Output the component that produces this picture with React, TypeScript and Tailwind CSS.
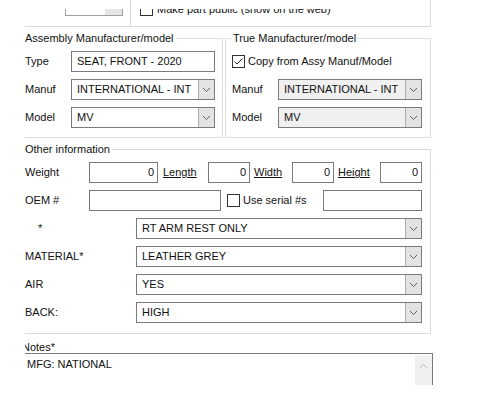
import React from "react";

function Chevron({ up }: { up?: boolean }) {
  return (
    <svg width="9" height="6" viewBox="0 0 9 6" className="block">
      <path
        d={up ? "M1 5 L4.5 1.5 L8 5" : "M1 1 L4.5 4.5 L8 1"}
        fill="none"
        stroke={up ? "#b8b8b8" : "#606060"}
        strokeWidth="1"
      />
    </svg>
  );
}

function CheckBox({ checked }: { checked?: boolean }) {
  return (
    <div className="w-[13px] h-[13px] border border-[#333] bg-white flex items-center justify-center shrink-0">
      {checked && (
        <svg width="11" height="11" viewBox="0 0 11 11">
          <path d="M1.5 5.5 L4 8 L9.5 2.5" fill="none" stroke="#222" strokeWidth="1" />
        </svg>
      )}
    </div>
  );
}

function TextBox({ value, w, right }: { value?: string; w: string; right?: boolean }) {
  return (
    <div
      className={`h-[21px] border border-[#7a7a7a] bg-white leading-[19px] shrink-0 ${w} ${
        right ? "text-right pr-[3px]" : "pl-[5px]"
      }`}
    >
      {value}
    </div>
  );
}

function Combo({ value, w, disabled }: { value: string; w: string; disabled?: boolean }) {
  return (
    <div
      className={`flex h-[21px] border border-[#7a7a7a] shrink-0 ${w} ${
        disabled ? "bg-[#f0f0f0]" : "bg-white"
      }`}
    >
      <div className="flex-1 pl-[5px] leading-[19px] whitespace-nowrap overflow-hidden">{value}</div>
      <div className="w-[16px] border-l border-[#adadad] bg-[#e3e3e3] flex items-center justify-center">
        <Chevron />
      </div>
    </div>
  );
}

function Row({ label, children, labelW }: { label: string; children: React.ReactNode; labelW: string }) {
  return (
    <div className="flex items-center h-[21px]">
      <div className={`shrink-0 ${labelW}`}>{label}</div>
      {children}
    </div>
  );
}

export default function App() {
  return (
    <div
      className="w-[500px] h-[400px] bg-white overflow-hidden text-[11px] text-[#111]"
      style={{ fontFamily: '"Liberation Sans", Arial, sans-serif' }}
    >
      <div className="ml-[25px] w-[406px]">
        {/* top strip, scrolled mostly out of view */}
        <div className="flex h-[27px] border-b border-r border-[#dcdcdc]">
          <div className="w-[106px] border-r border-[#dcdcdc]">
            <div className="mt-[9px] h-[7px] overflow-hidden">
              <div className="-mt-[15px] ml-[40px] w-[58px] h-[22px] border border-[#a0a0a0] flex">
                <div className="flex-1" />
                <div className="w-[17px] bg-[#e6e6e6]" />
              </div>
            </div>
          </div>
          <div className="flex-1">
            <div className="mt-[9px] h-[7px] overflow-hidden">
              <div className="-mt-[7px] ml-[9px] flex items-center gap-[4px] h-[14px]">
                <CheckBox />
                <span className="whitespace-nowrap leading-[14px]">Make part public (show on the web)</span>
              </div>
            </div>
          </div>
        </div>

        {/* manufacturer groups */}
        <div className="flex mt-[11px]">
          <div className="w-[198px] border-t border-r border-b border-[#dcdcdc] pb-[9px]">
            <div className="-mt-[8px] h-[15px] leading-[15px] flex">
              <span className="bg-white pr-[2px] whitespace-nowrap">Assembly Manufacturer/model</span>
            </div>
            <div className="mt-[5px] flex flex-col gap-[7px]">
              <Row label="Type" labelW="w-[46px]">
                <TextBox value="SEAT, FRONT - 2020" w="w-[144px]" />
              </Row>
              <Row label="Manuf" labelW="w-[46px]">
                <Combo value="INTERNATIONAL - INT" w="w-[144px]" />
              </Row>
              <Row label="Model" labelW="w-[46px]">
                <Combo value="MV" w="w-[144px]" />
              </Row>
            </div>
          </div>
          <div className="ml-[2px] w-[206px] border-t border-l border-r border-b border-[#dcdcdc] pb-[9px] pl-[6px]">
            <div className="-mt-[8px] h-[15px] leading-[15px] flex">
              <span className="bg-white px-[1px] whitespace-nowrap">True Manufacturer/model</span>
            </div>
            <div className="mt-[5px] flex flex-col gap-[7px]">
              <div className="flex items-center h-[21px] gap-[3px]">
                <CheckBox checked />
                <span className="whitespace-nowrap">Copy from Assy Manuf/Model</span>
              </div>
              <Row label="Manuf" labelW="w-[46px]">
                <Combo value="INTERNATIONAL - INT" w="w-[144px]" disabled />
              </Row>
              <Row label="Model" labelW="w-[46px]">
                <Combo value="MV" w="w-[144px]" disabled />
              </Row>
            </div>
          </div>
        </div>

        {/* other information */}
        <div className="mt-[11px] w-[406px] border-t border-r border-b border-[#dcdcdc] pb-[10px]">
          <div className="-mt-[8px] h-[15px] leading-[15px] flex">
            <span className="bg-white pr-[2px] whitespace-nowrap">Other information</span>
          </div>
          <div className="mt-[5px] flex flex-col gap-[7px]">
            <div className="flex items-center h-[21px]">
              <div className="w-[64px] shrink-0">Weight</div>
              <TextBox value="0" w="w-[69px]" right />
              <div className="w-[50px] pl-[5px] underline shrink-0">Length</div>
              <TextBox value="0" w="w-[42px]" right />
              <div className="w-[42px] pl-[4px] underline shrink-0">Width</div>
              <TextBox value="0" w="w-[42px]" right />
              <div className="w-[46px] pl-[4px] underline shrink-0">Height</div>
              <TextBox value="0" w="w-[42px]" right />
            </div>
            <div className="flex items-center h-[21px]">
              <div className="w-[64px] shrink-0">OEM #</div>
              <TextBox w="w-[132px]" />
              <div className="ml-[6px] flex items-center gap-[3px] w-[96px] shrink-0">
                <CheckBox />
                <span className="whitespace-nowrap">Use serial #s</span>
              </div>
              <TextBox w="w-[99px]" />
            </div>
            <Row label="*" labelW="w-[111px] pl-[13px]">
              <Combo value="RT ARM REST ONLY" w="w-[286px]" />
            </Row>
            <Row label="MATERIAL*" labelW="w-[111px]">
              <Combo value="LEATHER GREY" w="w-[286px]" />
            </Row>
            <Row label="AIR" labelW="w-[111px]">
              <Combo value="YES" w="w-[286px]" />
            </Row>
            <Row label="BACK:" labelW="w-[111px]">
              <Combo value="HIGH" w="w-[286px]" />
            </Row>
          </div>
        </div>
      </div>

      {/* notes */}
      <div className="ml-[25px] mt-[7px] w-[408px] overflow-hidden">
        <div className="-ml-[3px] h-[12px] leading-[12px]">Notes*</div>
        <div className="h-[32px] border-t border-r border-[#7a7a7a] flex">
          <div className="flex-1 pl-[2px] pt-[2px] leading-[16px]">MFG: NATIONAL</div>
          <div className="w-[17px] mt-[1px] bg-[#f0f0f0] flex justify-center pt-[8px]">
            <Chevron up />
          </div>
        </div>
      </div>
    </div>
  );
}
